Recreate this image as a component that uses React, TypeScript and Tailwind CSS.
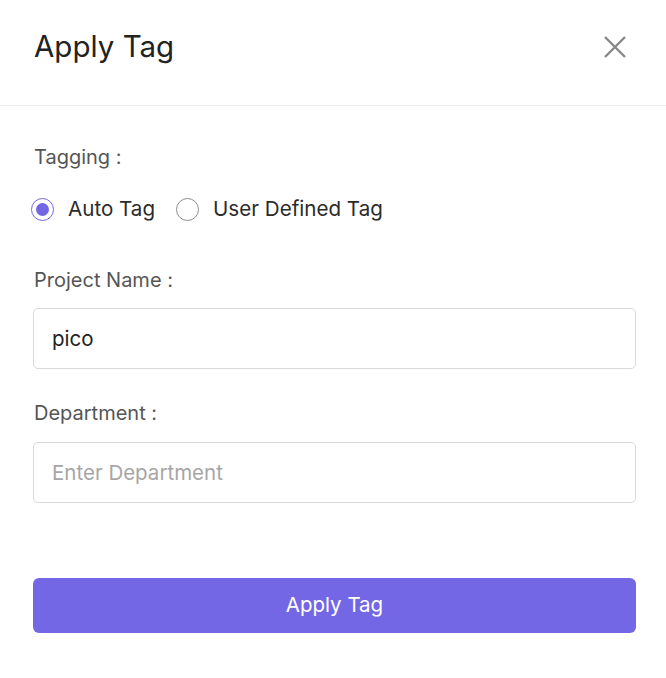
import React, { useState } from "react";

const font = { fontFamily: "Inter, Roboto, 'Noto Sans', sans-serif" };

const Radio: React.FC<{ checked: boolean; label: string; onClick: () => void }> = ({ checked, label, onClick }) => (
  <label className="flex items-center cursor-pointer" onClick={onClick}>
    <span
      className={`w-[23px] h-[23px] rounded-full border flex items-center justify-center ${
        checked ? "border-[#7367e6]" : "border-[#8c8c8c]"
      }`}
    >
      {checked && <span className="w-[13px] h-[13px] rounded-full bg-[#7367e6]" />}
    </span>
    <span className="ml-[14px] text-[20.6px] leading-[28px] text-[#2b2b2b]">{label}</span>
  </label>
);

export default function App() {
  const [mode, setMode] = useState<"auto" | "user">("auto");

  return (
    <div className="w-[666px] h-[678px] bg-white" style={font}>
      {/* header */}
      <div className="h-[106px] flex items-center justify-between pl-[34px] pr-[40px] border-b border-[#ececec]">
        <h2 className="text-[29.5px] text-[#222] leading-none -mt-[12px]">Apply Tag</h2>
        <button className="text-[#888] -mt-[12px]">
          <svg width="22" height="22" viewBox="0 0 22 22" fill="none" stroke="currentColor" strokeWidth="2.4">
            <path d="M1 1L21 21M21 1L1 21" />
          </svg>
        </button>
      </div>

      <div className="pl-[33px] pr-[30px] pt-[37px]">
        <div className="text-[20px] leading-[28px] text-[#555] pl-[1px]">Tagging :</div>
        <div className="flex items-center gap-[21px] mt-[24px] -ml-[2px] h-[28px]">
          <Radio checked={mode === "auto"} label="Auto Tag" onClick={() => setMode("auto")} />
          <Radio checked={mode === "user"} label="User Defined Tag" onClick={() => setMode("user")} />
        </div>

        <div className="text-[20px] leading-[28px] text-[#555] mt-[43px] pl-[1px]">Project Name :</div>
        <input
          className="mt-[14px] block w-full h-[61px] border border-[#d9d9d9] rounded-[5px] px-[18px] text-[20.5px] text-[#222] outline-none"
          defaultValue="pico"
        />

        <div className="text-[20px] leading-[28px] text-[#555] mt-[30px] pl-[1px]">Department :</div>
        <input
          className="mt-[15px] block w-full h-[61px] border border-[#d9d9d9] rounded-[5px] px-[18px] text-[20.5px] text-[#222] placeholder:text-[#a6a6a6] outline-none"
          placeholder="Enter Department"
        />

        <button className="mt-[75px] block w-full h-[55px] rounded-[6px] bg-[#7367e6] text-white text-[20.5px]">
          Apply Tag
        </button>
      </div>
    </div>
  );
}
